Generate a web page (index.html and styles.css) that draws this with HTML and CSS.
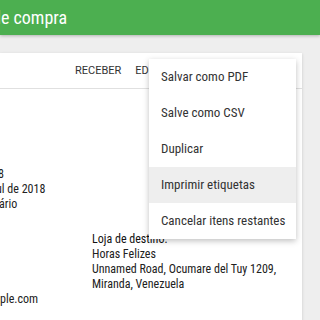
FILE: index.html
```html
<!DOCTYPE html>
<html lang="pt">
<head>
    <meta charset="UTF-8">
    <title>Ordem de compra</title>
    <link rel="stylesheet" href="styles.css">
</head>
<body>
    <header class="app-bar">
        <h1 class="title">de compra</h1>
    </header>

    <main class="page">
        <section class="card">
            <div class="actions">
                <button class="action-btn">Receber</button>
                <button class="action-btn">Editar</button>
            </div>

            <div class="details">
                <div class="info-left">
                    <p class="cut-1">8</p>
                    <p class="cut-2">ul de 2018</p>
                    <p class="cut-3">ário</p>
                </div>
                <div class="info-right">
                    <p class="label">Loja de destino:</p>
                    <p>Horas Felizes</p>
                    <p>Unnamed Road, Ocumare del Tuy 1209,</p>
                    <p>Miranda, Venezuela</p>
                </div>
                <p class="email">ple.com</p>
            </div>

            <ul class="menu">
                <li>Salvar como PDF</li>
                <li>Salve como CSV</li>
                <li>Duplicar</li>
                <li class="active">Imprimir etiquetas</li>
                <li>Cancelar itens restantes</li>
            </ul>
        </section>
    </main>
</body>
</html>
```

FILE: styles.css
```css
* {
    margin: 0;
    padding: 0;
    box-sizing: border-box;
}

body {
    font-family: Roboto, "Liberation Sans", sans-serif;
    font-stretch: 86%;
    background-color: #eeeeee;
    color: #212121;
    overflow: hidden;
}

.app-bar {
    height: 35px;
    background-color: #4caf50;
    box-shadow: 0 1px 3px rgba(0, 0, 0, 0.25);
    position: relative;
    z-index: 2;
}

.title {
    font-size: 18px;
    font-weight: 400;
    color: #fff;
    line-height: 35px;
    margin-left: -8px;
    white-space: nowrap;
}

.page {
    padding-top: 18px;
    width: 302px;
}

.card {
    background-color: #fff;
    height: 280px;
    box-shadow: 0 1px 3px rgba(0, 0, 0, 0.15);
    position: relative;
}

.actions {
    height: 36px;
    border-bottom: 1px solid #e0e0e0;
    display: flex;
    align-items: center;
    gap: 14px;
    padding-left: 75px;
}

.action-btn {
    background: none;
    border: none;
    font-family: inherit;
    font-size: 11px;
    text-transform: uppercase;
    color: #333;
    white-space: nowrap;
}

.details {
    font-size: 12px;
    line-height: 15px;
    padding-top: 78px;
    display: grid;
    grid-template-columns: 92px 1fr;
}

.info-left {
    white-space: nowrap;
}

.cut-1 {
    margin-left: -2px;
}

.cut-2 {
    margin-left: -4px;
}

.cut-3 {
    margin-left: -1px;
}

.info-right {
    padding-top: 65px;
    white-space: nowrap;
}

.label {
    color: #111;
}

.email {
    grid-column: 1 / 3;
}

.menu {
    list-style: none;
    position: absolute;
    top: 6px;
    left: 149px;
    width: 147px;
    background-color: #fff;
    box-shadow: 0 2px 6px rgba(0, 0, 0, 0.25);
    z-index: 3;
}

.menu li {
    height: 36px;
    line-height: 36px;
    padding-left: 12px;
    font-size: 13px;
    color: #333;
    white-space: nowrap;
}

.menu li.active {
    background-color: #eeeeee;
}
```
